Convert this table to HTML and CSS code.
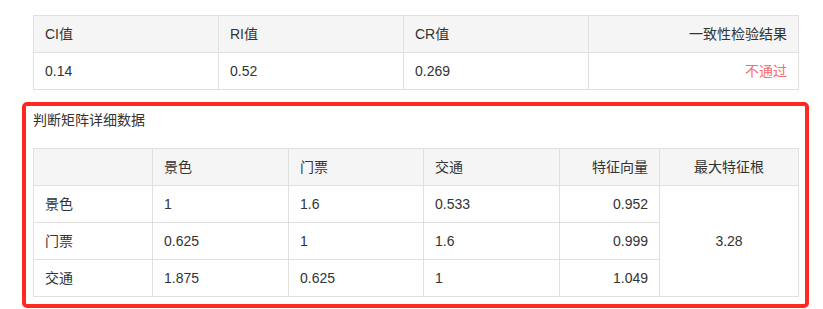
FILE: index.html
```html
<!DOCTYPE html>
<html lang="zh">
<head>
<meta charset="utf-8">
<link rel="stylesheet" href="styles.css">
</head>
<body>
<div class="page">
  <table class="grid summary">
    <colgroup><col class="c185"><col class="c185"><col class="c185"><col class="c210"></colgroup>
    <thead>
      <tr><th>CI值</th><th>RI值</th><th>CR值</th><th class="right">一致性检验结果</th></tr>
    </thead>
    <tbody>
      <tr><td>0.14</td><td>0.52</td><td>0.269</td><td class="right fail">不通过</td></tr>
    </tbody>
  </table>

  <div class="highlight">
    <div class="title">判断矩阵详细数据</div>
    <table class="grid matrix">
      <colgroup><col class="m1"><col class="m2"><col class="m3"><col class="m4"><col class="m5"><col class="m6"></colgroup>
      <thead>
        <tr><th></th><th>景色</th><th>门票</th><th>交通</th><th class="right">特征向量</th><th class="center">最大特征根</th></tr>
      </thead>
      <tbody>
        <tr><td>景色</td><td>1</td><td>1.6</td><td>0.533</td><td class="right">0.952</td><td class="center" rowspan="3">3.28</td></tr>
        <tr><td>门票</td><td>0.625</td><td>1</td><td>1.6</td><td class="right">0.999</td></tr>
        <tr><td>交通</td><td>1.875</td><td>0.625</td><td>1</td><td class="right">1.049</td></tr>
      </tbody>
    </table>
  </div>
</div>
</body>
</html>
```

FILE: styles.css
```css
html, body {
  margin: 0;
  padding: 0;
  background: #fff;
}
body {
  font-family: "Liberation Sans", "Noto Sans CJK SC", sans-serif;
  font-size: 14px;
  color: #333;
}
.page {
  padding: 15px 0 0 22px;
}
.grid {
  border-collapse: collapse;
  table-layout: fixed;
  width: 765px;
}
.grid th, .grid td {
  border: 1px solid #e0e0e0;
  height: 37px;
  padding: 0 11px;
  font-weight: normal;
  text-align: left;
  vertical-align: middle;
  line-height: 20px;
  box-sizing: border-box;
}
.grid th {
  background: #f5f5f5;
}
.summary {
  margin-left: 11px;
}
.c185 { width: 185px; }
.c210 { width: 210px; }
.m1 { width: 119px; }
.m2 { width: 136px; }
.m3 { width: 135px; }
.m4 { width: 136px; }
.m5 { width: 100px; }
.m6 { width: 139px; }
.right { text-align: right !important; }
.center { text-align: center !important; }
.fail { color: #f56c6c; }
.highlight {
  margin-top: 12px;
  width: 765px;
  border: 4px solid #ff2a1f;
  border-radius: 5px;
  padding: 4px 7px 7px 7px;
}
.title {
  line-height: 20px;
  height: 20px;
  margin-bottom: 18px;
}
```
